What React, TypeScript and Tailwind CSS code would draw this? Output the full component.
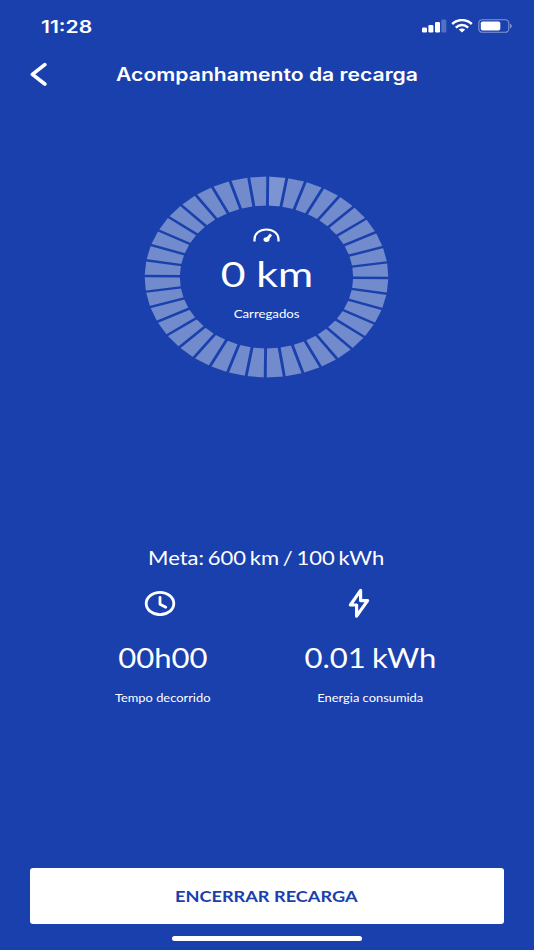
import type { ReactNode } from "react";

const SEGMENTS = 40;
const OUTER = 100.5;
const INNER = 71.5;
const OFFSET = 0.6;

const point = (radius: number, degrees: number) => {
  const angle = ((degrees - 90) * Math.PI) / 180;
  return `${(radius * Math.cos(angle)).toFixed(2)} ${(radius * Math.sin(angle)).toFixed(2)}`;
};

const segmentPath = (index: number) => {
  const step = 360 / SEGMENTS;
  const start = index * step + OFFSET;
  const end = start + step;
  return `M${point(OUTER, start)} L${point(OUTER, end)} L${point(INNER, end)} L${point(INNER, start)} Z`;
};

const gapLine = (index: number) => {
  const angle = (index * 360) / SEGMENTS + OFFSET;
  return `M${point(INNER - 2, angle)} L${point(OUTER + 2, angle)}`;
};

const StatusIcons = () => (
  <div className="flex items-center">
    <svg width="25" height="14" viewBox="0 0 25 14" fill="white">
      <rect x="0" y="8.5" width="5" height="5" rx="1.2" />
      <rect x="6.4" y="6" width="5" height="7.5" rx="1.2" />
      <rect x="13" y="3" width="5" height="10.5" rx="1.2" />
      <rect x="19.3" y="0.5" width="5" height="13" rx="1.2" opacity="0.25" />
    </svg>
    <svg
      className="ml-1"
      width="22"
      height="14"
      viewBox="0 0 22 14"
      fill="none"
      stroke="white"
      strokeWidth="2.5">
      <path d="M1.2 5C6.8 -0.2 15.2 -0.2 20.8 5" />
      <path d="M4.8 8.6C8.6 5.2 13.4 5.2 17.2 8.6" />
      <path d="M7.8 10.6C9.7 9 12.3 9 14.2 10.6L11 13.4Z" fill="white" stroke="none" />
    </svg>
    <svg className="ml-[5px]" width="36" height="14" viewBox="0 0 36 14" fill="none">
      <rect x="0.8" y="0.7" width="30" height="12.6" rx="3.6" stroke="white" strokeOpacity="0.45" strokeWidth="1.1" />
      <rect x="2.8" y="2.5" width="19.5" height="9" rx="1.8" fill="white" />
      <path d="M32.2 4.7C34.2 5.3 34.2 8.7 32.2 9.3Z" fill="white" fillOpacity="0.5" />
    </svg>
  </div>
);

const ChargeRing = ({ children }: { children: ReactNode }) => (
  <div className="grid justify-items-center">
    <svg
      className="col-start-1 row-start-1"
      width="245"
      height="202"
      viewBox="-101 -101 202 202"
      preserveAspectRatio="none">
      {Array.from({ length: SEGMENTS }, (_, i) => (
        <path key={i} d={segmentPath(i)} fill={i === 0 ? "#7d94d3" : "#718bcd"} />
      ))}
      {Array.from({ length: SEGMENTS }, (_, i) => (
        <path key={i} d={gapLine(i)} stroke="#1a40ae" strokeWidth="2.4" />
      ))}
    </svg>
    <div className="col-start-1 row-start-1 flex flex-col items-center pt-[52px]">{children}</div>
  </div>
);

interface StatProps {
  icon: ReactNode;
  value: string;
  label: string;
}

const Stat = ({ icon, value, label }: StatProps) => (
  <div className="flex w-[207px] flex-col items-center whitespace-nowrap">
    <div className="flex h-8 items-center">{icon}</div>
    <p className="mt-[21px] mr-px scale-x-[1.15] text-[27px] leading-9 [word-spacing:-1.5px]">{value}</p>
    <p className="mt-[14px] mr-px scale-x-[1.12] text-[11.5px] leading-4">{label}</p>
  </div>
);

export default function App() {
  return (
    <div className="flex h-[950px] w-[534px] flex-col overflow-hidden bg-[#1a40ae] font-[Lato,sans-serif] text-white">
      <div className="flex h-[52px] items-center justify-between pr-[20px] pl-[41px]">
        <span className="origin-left scale-x-[1.24] pt-[3px] font-[Inter,sans-serif] text-[17px] font-semibold">
          11:28
        </span>
        <StatusIcons />
      </div>

      <header className="grid h-11 grid-cols-[60px_1fr_60px] items-center">
        <button aria-label="Voltar" className="pl-[29px]">
          <svg width="20" height="24" viewBox="0 0 20 24" fill="none" stroke="white" strokeWidth="3.7">
            <path d="M15.8 2.6L3.4 12.4L15.8 22" strokeLinejoin="round" strokeLinecap="round" />
          </svg>
        </button>
        <h1 className="scale-x-[1.175] text-center font-[Inter,sans-serif] text-[18px] font-semibold whitespace-nowrap">
          Acompanhamento da recarga
        </h1>
      </header>

      <main className="flex flex-1 flex-col items-center">
        <div className="mt-20 pr-px">
          <ChargeRing>
            <svg className="ml-px" width="27" height="15" viewBox="0 0 27 15" fill="none" stroke="white">
              <path d="M1.5 13.5V11.5C1.5 5.5 6.5 1.5 13.5 1.5S25.5 5.5 25.5 11.5V13.5" strokeWidth="2.2" />
              <path d="M13.4 12L18 6.5" strokeWidth="2.8" />
              <ellipse cx="13.5" cy="11.6" rx="3" ry="2.4" fill="white" stroke="none" />
            </svg>
            <p className="mt-2 scale-x-[1.22] text-[35px] leading-[44px]">0 km</p>
            <p className="mt-[11px] scale-x-[1.15] text-[11.5px] leading-4">Carregados</p>
          </ChargeRing>
        </div>

        <p className="mt-[168px] scale-x-[1.19] pr-px text-[18.5px] leading-6 [word-spacing:-1.6px]">
          Meta: 600 km / 100 kWh
        </p>

        <div className="mt-[17px] flex">
          <Stat
            icon={
              <svg
                className="mr-[7px]"
                width="32"
                height="26"
                viewBox="0 0 32 26"
                fill="none"
                stroke="white"
                strokeWidth="2.8"
                strokeLinecap="round"
                strokeLinejoin="round">
                <ellipse cx="16" cy="13.5" rx="13.8" ry="11.2" />
                <path d="M16 7.5V14.2L21.8 17.2" />
              </svg>
            }
            value="00h00"
            label="Tempo decorrido"
          />
          <Stat
            icon={
              <svg
                className="mr-[23px]"
                width="24"
                height="32"
                viewBox="0 0 24 32"
                fill="none"
                stroke="white"
                strokeWidth="3.2"
                strokeLinejoin="round">
                <path d="M13.6 3.4L3.4 18H9.6V29.2L20.6 13.6H13.6Z" />
              </svg>
            }
            value="0.01 kWh"
            label="Energia consumida"
          />
        </div>
      </main>

      <footer className="flex flex-col items-center px-[30px] pb-[9px]">
        <button className="h-14 w-full rounded-[3px] bg-white text-[#1a40ae]">
          <span className="inline-block scale-x-[1.135] pr-0.5 text-[16px] font-bold">ENCERRAR RECARGA</span>
        </button>
        <div className="mt-3 h-[5px] w-[190px] rounded-full bg-white" />
      </footer>
    </div>
  );
}
